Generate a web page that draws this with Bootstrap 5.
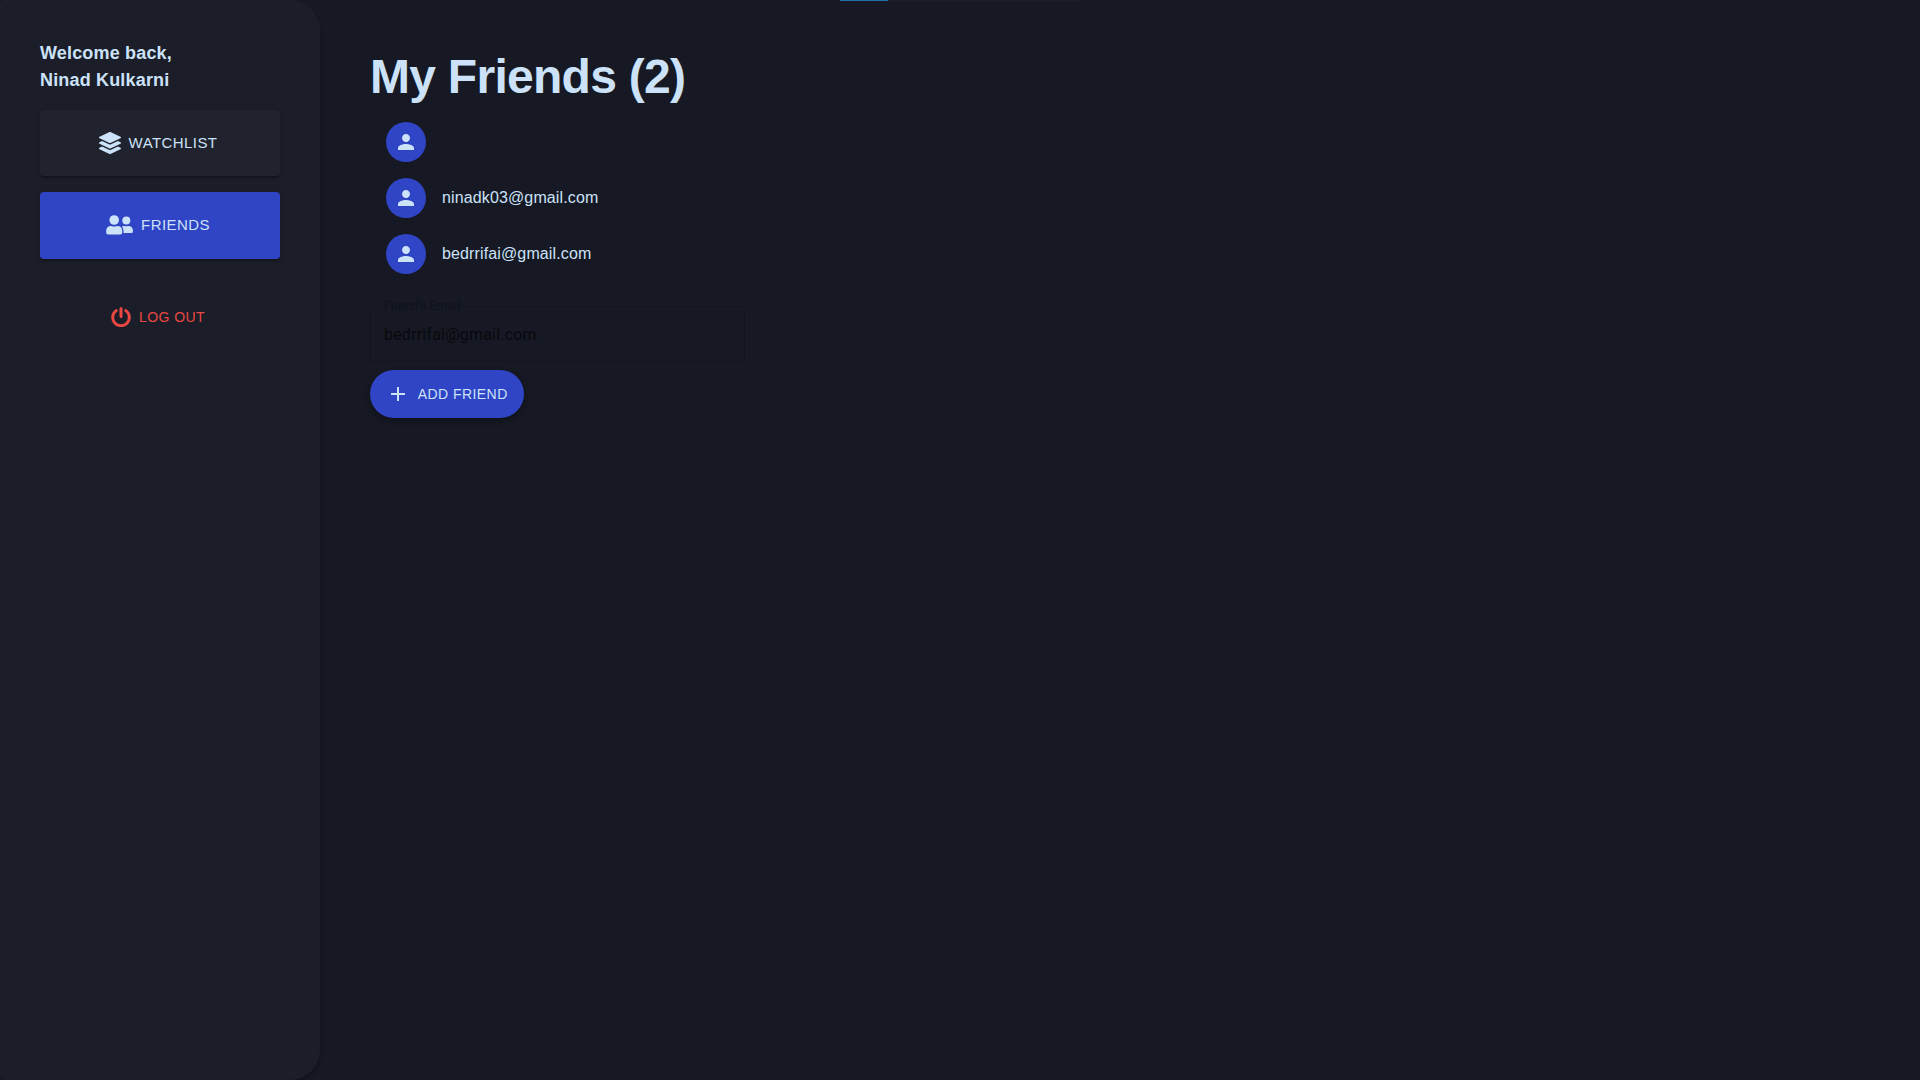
<!DOCTYPE html>
<html lang="en">
<head>
<meta charset="utf-8">
<meta name="viewport" content="width=device-width, initial-scale=1">
<title>My Friends</title>
<link href="https://cdn.jsdelivr.net/npm/bootstrap@5.3.0/dist/css/bootstrap.min.css" rel="stylesheet">
<style>
  body { background: #161923; color: #cce2f8; font-family: "Liberation Sans", Arial, sans-serif; font-size: 16px; overflow: hidden; }
  .side-panel { width: 320px; padding: 40px; background: #1b1e28; border-radius: 4px 30px 30px 4px; box-shadow: 0 3px 4px -1px rgba(0,0,0,.2), 0 4px 5px rgba(0,0,0,.1); }
  .greeting { font-size: 18px; line-height: 27px; margin-bottom: 16px; letter-spacing: .17px; }
  .side-nav { gap: 16px; }
  .side-btn { height: 66.3px; border: 0; border-radius: 4px; padding: 0 4px 0 0; font-size: 15px; letter-spacing: .42px; color: #cce2f8; background: #20232d; box-shadow: 0 3px 1px -2px rgba(0,0,0,.2), 0 2px 2px 0 rgba(0,0,0,.14), 0 1px 5px 0 rgba(0,0,0,.12); }
  .side-btn.current { background: #2f45c5; }
  .side-btn span { margin-left: 8px; line-height: 22px; padding-bottom: 1px; }
  .logout-btn { margin-top: 41px; padding: 0 4px 0 0; color: #ea4742; font-size: 14px; letter-spacing: .4px; height: 34px; }
  .logout-btn:hover { color: #ea4742; }
  .logout-btn span { padding-top: 1px; }
  .page-main { padding: 47px 50px; }
  .page-title { font-size: 48px; line-height: 60px; letter-spacing: -.72px; margin: 0 0 7px; }
  .friend-row { height: 56px; padding: 8px 16px; gap: 16px; letter-spacing: .13px; }
  .avatar-dot { width: 40px; height: 40px; background: #2f45c5; }
  .email-field { width: 375px; height: 61px; margin: 19px 0 0; padding: 0 13px; border: 1px solid #11141b; border-radius: 4px; font-family: Roboto, sans-serif; color: #07090d; }
  .email-field legend { float: none; width: auto; margin: 0 0 0 -5px; padding: 0 5px; font-size: 12px; line-height: 11px; letter-spacing: .2px; color: #0e1118; }
  .email-input { background: none; border: 0; padding: 0; color: inherit; width: 100%; height: 23px; margin-top: 11px; outline: 0; letter-spacing: .2px; display: block; }
  .add-btn { width: 154px; height: 48px; margin-top: 8px; border: 0; border-radius: 24px; background: #2f45c5; color: #cce2f8; font-size: 14px; letter-spacing: .43px; gap: 7.5px; box-shadow: 0 3px 5px -1px rgba(0,0,0,.2), 0 4px 8px rgba(0,0,0,.14); }
  .load-strip { left: 840px; top: 0; width: 240px; height: 1px; background: #1b1f25; }
  .load-strip div { width: 48px; height: 1px; background: #2370ae; }
</style>
<script src="https://cdn.jsdelivr.net/npm/bootstrap@5.3.0/dist/js/bootstrap.bundle.min.js"></script>
</head>
<body>
<svg class="d-none">
  <symbol id="person" viewBox="0 0 24 24"><path fill="currentColor" d="M12 12c2.21 0 4-1.79 4-4s-1.79-4-4-4-4 1.79-4 4 1.79 4 4 4zm0 2c-2.67 0-8 1.34-8 4v2h16v-2c0-2.66-5.33-4-8-4z"/></symbol>
</svg>
<div class="d-flex vh-100">
  <aside class="side-panel d-flex flex-column flex-shrink-0">
    <div class="greeting fw-bold">Welcome back,<br>Ninad Kulkarni</div>
    <nav class="side-nav d-flex flex-column">
      <button class="side-btn d-flex align-items-center justify-content-center w-100">
        <svg width="22" height="22" viewBox="0 0 512 512" fill="currentColor"><path d="M12.41 148.02l232.94 105.67c6.8 3.09 14.49 3.09 21.29 0l232.94-105.67c16.55-7.51 16.55-32.52 0-40.03L266.65 2.31a25.607 25.607 0 0 0-21.29 0L12.41 107.98c-16.55 7.51-16.55 32.53 0 40.04zm487.18 88.28l-58.09-26.33-161.64 73.27c-7.56 3.43-15.59 5.17-23.86 5.17s-16.29-1.74-23.86-5.17L70.51 209.97l-58.1 26.33c-16.55 7.5-16.55 32.5 0 40l232.94 105.59c6.8 3.08 14.49 3.08 21.29 0L499.59 276.3c16.55-7.5 16.55-32.5 0-40zm0 127.8l-57.87-26.23-161.86 73.37c-7.56 3.43-15.59 5.17-23.86 5.17s-16.29-1.74-23.86-5.17L70.29 337.87 12.41 364.1c-16.55 7.5-16.55 32.5 0 40l232.94 105.59c6.8 3.08 14.49 3.08 21.29 0L499.59 404.1c16.55-7.5 16.55-32.5 0-40z"/></svg>
        <span>WATCHLIST</span>
      </button>
      <button class="side-btn current d-flex align-items-center justify-content-center w-100">
        <svg width="27" height="20" viewBox="0 0 27 20" fill="currentColor"><circle cx="8.2" cy="5" r="4.8"/><path d="M4.8 10.9h.5a6.5 6.5 0 0 0 5.8 0h.5a4.5 4.5 0 0 1 4.6 4.6v2a2 2 0 0 1-2 2H2.2a2 2 0 0 1-2-2v-2a4.5 4.5 0 0 1 4.6-4.6z"/><circle cx="20.3" cy="5.6" r="4"/><path d="M18 10.9h.2a5.5 5.5 0 0 0 4.2 0h.2a4.3 4.3 0 0 1 4.3 4.3v1.3a1.5 1.5 0 0 1-1.5 1.5h-7.9v-2.5a6 6 0 0 0-1.6-4.1 4 4 0 0 1 2.1-.5z"/></svg>
        <span>FRIENDS</span>
      </button>
    </nav>
    <button class="logout-btn btn border-0 d-flex align-items-center justify-content-center w-100">
      <svg width="20" height="20" viewBox="0 0 20 20" fill="none" stroke="currentColor" stroke-width="3" stroke-linecap="round"><path d="M5.2 3.6a8.3 8.3 0 1 0 9.6 0M10 1.5v8"/></svg>
      <span class="ms-2">LOG OUT</span>
    </button>
  </aside>
  <main class="page-main flex-grow-1">
    <h1 class="page-title fw-bold">My Friends (2)</h1>
    <div class="friend-list">
      <div class="friend-row d-flex align-items-center"><div class="avatar-dot rounded-circle d-flex align-items-center justify-content-center"><svg width="24" height="24"><use href="#person"/></svg></div></div>
      <div class="friend-row d-flex align-items-center"><div class="avatar-dot rounded-circle d-flex align-items-center justify-content-center"><svg width="24" height="24"><use href="#person"/></svg></div><span>ninadk03@gmail.com</span></div>
      <div class="friend-row d-flex align-items-center"><div class="avatar-dot rounded-circle d-flex align-items-center justify-content-center"><svg width="24" height="24"><use href="#person"/></svg></div><span>bedrrifai@gmail.com</span></div>
    </div>
    <fieldset class="email-field">
      <legend>Friend's Email</legend>
      <input class="email-input" type="text" value="bedrrifai@gmail.com" aria-label="Friend's Email">
    </fieldset>
    <button class="add-btn d-flex align-items-center justify-content-center p-0">
      <svg width="24" height="24" viewBox="0 0 24 24" fill="currentColor"><path d="M19 13h-6v6h-2v-6H5v-2h6V5h2v6h6v2z"/></svg>
      <span>ADD FRIEND</span>
    </button>
  </main>
</div>
<div class="load-strip position-absolute"><div></div></div>
</body>
</html>
